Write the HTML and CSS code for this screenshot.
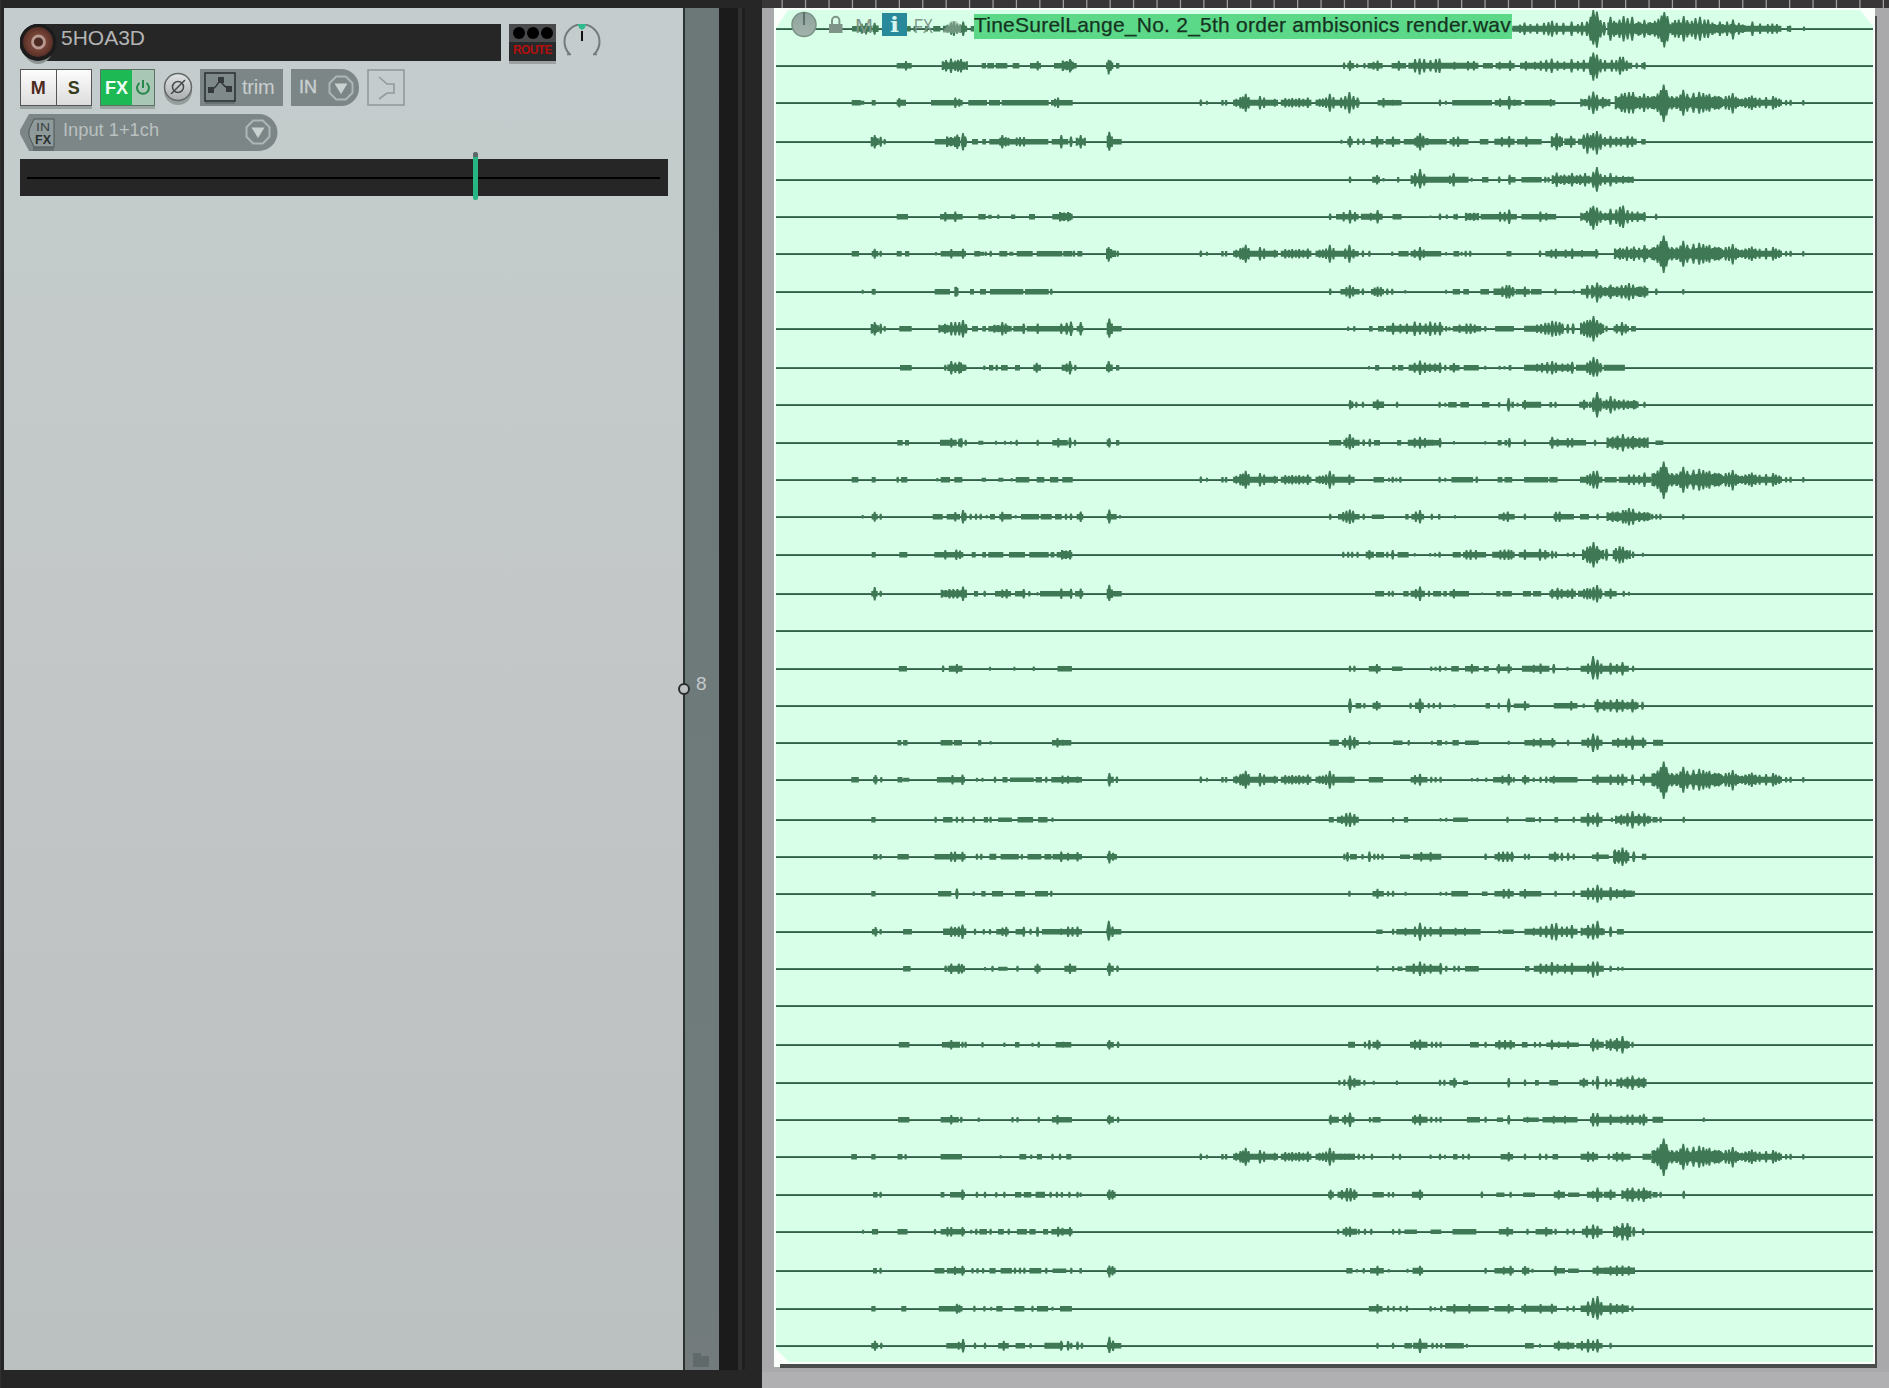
FILE: index.html
```html
<!DOCTYPE html>
<html lang="en">
<head>
<meta charset="utf-8">
<title>5HOA3D</title>
<link rel="stylesheet" href="styles.css">
</head>
<body>
<div class="app">
  <section class="tracks">
    <div class="panel">
      <div class="row">
        <div class="name">
          <svg class="rec" width="37" height="41" viewBox="0 0 37 41">
            <defs><radialGradient id="rg"><stop offset="0" stop-color="#5a3026"/><stop offset=".6" stop-color="#744236"/><stop offset="1" stop-color="#552f26"/></radialGradient></defs>
            <ellipse cx="18" cy="23" rx="15" ry="17" fill="#8d9494"/>
            <circle cx="18" cy="18.500" r="18.500" fill="#1c1c1c"/>
            <circle cx="18" cy="18" r="15" fill="url(#rg)"/>
            <circle cx="18.500" cy="18" r="6" fill="#4b2b23" stroke="#b89a91" stroke-width="2.800"/>
          </svg>
          <span>5HOA3D</span>
        </div>
        <div class="route">
          <div class="leds"><i></i><i></i><i></i></div>
          <b>ROUTE</b>
        </div>
        <svg class="pan" width="38" height="37" viewBox="0 0 38 37">
          <path d="M7 30.500A17.500 17.500 0 1 1 31 30.500" fill="none" stroke="#747b7b" stroke-width="2"/>
          <path d="M4 30.500h4M30 30.500h4" stroke="#747b7b" stroke-width="1.500"/>
          <path d="M15 0h8l-1 4-3 2-3-2z" fill="#2dbb8c"/>
          <path d="M19 7v10" stroke="#111" stroke-width="2"/>
        </svg>
      </div>
      <div class="row second">
        <div class="ms"><b class="m">M</b><b class="s">S</b></div>
        <div class="fx"><b>FX</b><span><svg width="16" height="18" viewBox="0 0 16 18" fill="none" stroke="#26874b" stroke-width="2"><path d="M4.500 4A6 6 0 1 0 11.500 4M8 1v8"/></svg></span></div>
        <svg class="phase" width="30" height="34" viewBox="0 0 30 34">
          <defs><linearGradient id="pg" x2="0" y2="1"><stop offset="0" stop-color="#e2e4e4"/><stop offset="1" stop-color="#a9adad"/></linearGradient></defs>
          <circle cx="15" cy="19" r="14" fill="#969d9d"/>
          <circle cx="15" cy="15" r="13.500" fill="url(#pg)" stroke="#626868" stroke-width="1.500"/>
          <circle cx="15" cy="15" r="5.500" fill="none" stroke="#454a4a" stroke-width="1.500"/>
          <path d="M8 22L22 8M12.500 17.500L17.500 12.500" stroke="#454a4a" stroke-width="1.500"/>
        </svg>
        <div class="trim">
          <svg width="32" height="32" viewBox="0 0 32 32">
            <path d="M1 30h30v3H1z" fill="#687171"/>
            <rect x="1" y="1" width="30" height="28" fill="#7f898a" stroke="#2f3434" stroke-width="1.600"/>
            <path d="M7 18Q12 16 16 8Q20 16 26 16" fill="none" stroke="#343a3a" stroke-width="1.600"/>
            <path d="M4 15h6v6H4zM14 5h6v6h-6zM22 14h6v6h-6z" fill="#343a3a"/>
          </svg>
          <span>trim</span>
        </div>
        <div class="in"><span>IN</span><svg width="26" height="26" viewBox="0 0 26 26"><path d="M8.200 1.500h9.600l6.700 6.700v9.600l-6.700 6.700H8.200l-6.700-6.700V8.200z" fill="none" stroke="#aeb6b6" stroke-width="2"/><path d="M6.500 8.500h13l-6.500 10.500z" fill="#c9d0d0"/></svg></div>
        <svg class="mode" width="38" height="37" viewBox="0 0 38 37" fill="none" stroke="#939a9b" stroke-width="1.600"><rect x="1" y="1" width="36" height="35"/><path d="M12 8l8 7h7v9h-7l-8 6"/></svg>
      </div>
      <div class="input">
        <svg class="tip" width="258" height="37" viewBox="0 0 258 37"><path d="M9 0H239A18.500 18.500 0 0 1 239 37H9L0 20V16z" fill="#7c8687"/></svg>
        <svg class="infx" width="28" height="33" viewBox="0 0 28 33">
          <path d="M5 28h21v5H5z" fill="#667071"/>
          <path d="M6 1h20v28H6L1 18v-6z" fill="#8f9a9a" stroke="#4d5657"/>
          <text x="8" y="12.500" fill="#3d4545" font-size="11.500" textLength="14" lengthAdjust="spacingAndGlyphs">IN</text>
          <text x="7" y="25.500" fill="#2a3030" font-weight="bold" font-size="12.500" textLength="16" lengthAdjust="spacingAndGlyphs">FX</text>
        </svg>
        <span>Input 1+1ch</span>
        <svg class="drop" width="26" height="26" viewBox="0 0 26 26"><path d="M8.200 1.500h9.600l6.700 6.700v9.600l-6.700 6.700H8.200l-6.700-6.700V8.200z" fill="none" stroke="#aeb6b6" stroke-width="2"/><path d="M6.500 8.500h13l-6.500 10.500z" fill="#c9d0d0"/></svg>
      </div>
      <div class="fader"><div class="groove"></div><div class="thumb"></div></div>
    </div>
    <div class="side">
      <i class="node"></i><span class="num">8</span>
      <svg class="folder" width="16" height="15" viewBox="0 0 16 15"><path d="M0 1h8v3h8v11H0z" fill="#606a6b"/></svg>
    </div>
    <div class="meter"></div>
    <div class="gutter"></div>
  </section>
  <section class="arrange">
    <svg class="ruler" id="ruler" width="1127" height="8"></svg>
    <div class="lane">
      <div class="item">
        <svg id="wave" width="1103" height="1360" viewBox="774 8 1103 1360"></svg>
        <div class="head">
          <svg width="170" height="30" viewBox="0 0 170 30">
            <defs><linearGradient id="kg" x2="0" y2="1"><stop offset="0" stop-color="#8fa39d"/><stop offset="1" stop-color="#a3b3ac"/></linearGradient></defs>
            <circle cx="13" cy="13.500" r="12" fill="url(#kg)" stroke="#7b9187" stroke-width="1.500"/>
            <path d="M13 1v13" stroke="#4d5f58" stroke-width="1.500"/>
            <path d="M38 13h13.500v9H38z" fill="#809388"/><path d="M41 13V9.500a3.700 3.700 0 0 1 7.400 0V13" fill="none" stroke="#809388" stroke-width="2"/>
            <text x="64" y="22" font-size="21" fill="#7d9688" textLength="18" lengthAdjust="spacingAndGlyphs">M</text>
            <rect x="91" y="2" width="25" height="23" fill="#28899a"/>
            <text x="99" y="21" font-size="21" font-weight="bold" font-family="DejaVu Serif, serif" fill="#d8f5ee" textLength="9" lengthAdjust="spacingAndGlyphs">i</text>
            <text x="123" y="22" font-size="21" fill="#7d9688" textLength="19" lengthAdjust="spacingAndGlyphs">FX</text>
            <path d="M152 20l8-10h5l9 8v4h-22z" fill="#8fa899" fill-opacity=".6"/>
          </svg>
          <span class="file">TineSurelLange_No. 2_5th order ambisonics render.wav</span>
        </div>
      </div>
    </div>
  </section>
</div>
<script src="wave.js"></script>
</body>
</html>
```
FILE: styles.css
```css
* { box-sizing: border-box; }
body { margin: 0; background: #262626; font-family: "Liberation Sans", Arial, sans-serif; overflow: hidden; }
svg { display: block; flex: none; }
.app { display: flex; width: 1889px; height: 1388px; }

.tracks { display: flex; width: 762px; padding: 8px 0 18px 3px; background: #262626; border-left: 1px solid #303030; }
.panel { width: 679px; padding: 16px 15px 0 16px; background: linear-gradient(#c5cccd 0, #c4cbcb 220px, #c3c7c8 45%, #c1c4c5 65%, #bbc0c0); }
.row { display: flex; align-items: flex-start; height: 37px; }
.name { display: flex; align-items: center; width: 481px; height: 37px; background: #262626; border-radius: 18px 0 0 18px; color: #b4b4b4; font-size: 21px; }
.rec { align-self: flex-start; margin-right: 4px; }
.name span { padding-bottom: 9px; }
.route { width: 47px; height: 37px; margin-left: 8px; background: #262a2b; box-shadow: 0 3px 0 #9ba1a3; text-align: center; color: #b30f0f; font-size: 12px; line-height: 17px; }
.route b { letter-spacing: -.6px; }
.leds { display: flex; justify-content: center; gap: 2px; height: 18px; padding-top: 3px; background: #484a4b; }
.leds i { width: 12px; height: 12px; border-radius: 50%; background: #000; }
.pan { margin-left: 7px; }

.second { margin-top: 8px; }
.ms { display: flex; width: 72px; height: 37px; border: 1.500px solid #555; background: linear-gradient(#fdfdfd, #dcdcdc); box-shadow: 0 3px 0 #9aa1a1; font-size: 18px; line-height: 36px; text-align: center; }
.ms b { flex: 1; }
.m { border-right: 1.500px solid #555; color: #4e2a20; }
.s { color: #373c1c; }
.fx { display: flex; width: 55px; height: 37px; margin-left: 8px; border: 1px solid #5d7267; background: #a9c7b5; color: #f2fff6; font-size: 18px; line-height: 36px; text-align: center; box-shadow: 0 3px 0 #9aa5a1; }
.fx b { width: 31px; background: #1cb955; }
.fx span { display: flex; align-items: center; padding-left: 3px; }
.phase { margin: 3px 0 0 8px; }
.trim { display: flex; align-items: center; width: 83px; height: 37px; margin-left: 7px; padding-left: 4px; background: #7c8687; color: #c9cfcf; font-size: 20px; }
.trim span { margin-left: 6px; letter-spacing: -.2px; }
.in { display: flex; align-items: center; justify-content: space-between; width: 68px; height: 37px; margin-left: 8px; padding: 0 5px 0 8px; border-radius: 0 18px 18px 0; background: #7c8687; color: #c9d0d0; font-size: 18px; -webkit-text-stroke: .4px #c9d0d0; }
.mode { margin-left: 8px; }

.input { position: relative; display: flex; width: 258px; height: 37px; margin-top: 8px; padding: 4px 7px 0 8px; color: #b9c0c0; font-size: 18.300px; }
.tip { position: absolute; left: 0; top: 0; }
.infx, .input span, .drop { position: relative; }
.input span { margin: 1px 0 0 7px; }
.drop { margin: 1px 0 0 auto; }
.fader { position: relative; width: 648px; height: 37px; margin-top: 8px; padding: 18px 8px 0 7px; background: #262626; }
.groove { height: 2px; background: #000; }
.thumb { position: absolute; left: 453px; top: -7px; width: 5px; height: 48px; border-top: 5px solid #5c6665; border-radius: 2px; background: #27b584; }

.side { position: relative; width: 36px; border-left: 2px solid #2c3131; background: linear-gradient(#6c7778, #707b7b 85%, #737b7c); color: #c4caca; }
.node { position: absolute; left: -7px; top: 675px; width: 12px; height: 12px; border: 2px solid #2a2e2e; border-radius: 50%; background: #bdc1c2; }
.num { position: absolute; left: 11px; top: 665px; font-size: 19px; }
.folder { position: absolute; left: 8px; bottom: 3px; }
.meter { width: 26px; border-left: 19px solid #1b1b1b; border-right: 3px solid #1f1f1f; background: #303030; }
.gutter { flex: 1; }

.arrange { display: flex; flex-direction: column; flex: 1; background: #b0b0b2; }
.ruler { background: #383637; }
.lane { display: flex; height: 1364px; padding-left: 12px; background: #a9a9ab; }
.item { position: relative; width: 1103px; height: 1360px; }
.head { position: absolute; left: 17px; top: 3px; display: flex; gap: 13px; }
.file { height: 25px; width: 538px; margin-top: 3px; background: #5cd889; color: #15331f; font-size: 21px; line-height: 21px; white-space: nowrap; letter-spacing: .24px; -webkit-text-stroke: .25px #15331f; }
```
FILE: wave.js
```js
// Horizontal scales: start pixel and units per pixel.
const scales = {
  a: [840, 3], b: [1180, 2.2116], c: [1180, 2.45], d: [840, 1.6], e: [760, 2.8]
};
// Tokens: "from-to*amp" is a block, "x:up/down" a peak; amplitudes are thirds of a pixel.
const swell = 'c 51:10 66:6 101-107 110-116 130-240*9 138:12 148:17 154:19 161:27 168:17 196:20 206:16 232:12 247-322*9 258:14 267:12 275:14 284:12 292:14 302:12 313:16 332-428*9 342:12 350:13 358:16 367:27 376:17';
const tail = 'c 1155-1325*17 1325-1410*12 1410-1475*9 1162:20 1170:28 1178:38 1185:55/58 1192:38 1205:20 1218:18 1226:25 1233:39 1243:27 1258:30 1272:33 1282:29 1290:24 1297:27 1310:21 1320:20 1337:20 1345:22 1354:29/32 1362:18 1385:16 1394:17 1401:22 1410:16 1420:15 1436:17 1453:20 1460:16 1468:13 1485:8 1496:9 1527:8';

const lanes = [
 [28, 'e 258-275 275-313*9 285:15 297:17 315-332*10 321:18 412-422 430-436 462-470 485-505 512-580*9 525:12 535:18 543:22 552:15 561:13 569:22 590-600',
  'b 735-905*9 752:13 762:19 775:14 790:16 805:18 815:20 823:24 833:18 848:18 866:22 880:14 889:20 900:22 908:36 914:56/48 922:52/57 930:26 945-1180*17 938:20 952:36 960:24 972:28 981:38 990:32 1000:36 1014:22 1027:27 1040:20 1050:24 1058:30 1065:40 1071:50/56 1078:38 1095:26 1103:28 1114:38 1122:26 1132:24 1140:32 1150:36 1160:28 1168:28 1180-1250*13 1194:22 1210:22 1223:28/32 1236:18 1250-1330*9 1266:22 1283:16 1300:14 1310:16 1320:14 1342-1352 1349:10 1380:7'],
 [65, 'a 170-215 198:14 305-380*12 318:17 333:22 346:16 354:18 363:20 372:12 425-438 442-462 467-502 518-538 570-603 593:14 642-710 665-698*14 690:20 798-820*10 806:18/26 812:16 828-838', 'b 363:10 370-385 376:16 392:7 408:8 415-448 428:12 437:16 468-500 484:15 505-660*9 520:20 530:22/27 540:20 554:17 566:20 574:22 607:12 637:14 650:14 670-692 698-740 707:12 730:16 752-905*9 765:14 785:12 798:15 810:18 822:22 835:15 850:13 866:20 880:14 893:18 905-1000*9 908:28 914:40/45 922:34/38 930:20 940:17 955:18 965:17 973:27 980:27/17 988:16 1010:9 1020-1030 1027:11'],
 [102, 'a 35-62 62-73*6 95-107 170-198*9 178:14 273-368 346:16 358:12 385-441 447-480 485-626 633-698 645:12 654:16', 'b 437-490 450:14 470:9 575:10 588:6 602-690 696-755 708:13 728:20 740:10 762-830 820:11 885-950*11 905:22 914:34 922:24 935:17', swell, 'c 415:32 395:16 405:20 425:20 435:16 428-440 1065-1160*18 1082:28 1090:30 1100:32 1110:32 1120:16 1137:28', tail],
 [141, 'a 92-115*13 104:20 122:15 134:8 284-320 318-360*14 352:22 369:26 376:16 396-414 427-438 448-625 478-505*11 487:20 497:14 530:13 540:14 552:14 635-685 664:20 693:16 707-732*11 722:20 800-818*16 808:30/27 818-845', 'b 357:6 370-382*9 376:17 394:10 406:10 422-450 436:17 455-487 471:16 495-590*8 518-545*11 525:18 531:26 538:18 596-638 605:14 615:16 663-682 695-740*9 712:14 728:17 745-800 766:16 820-845*15 833:26 850-875*10 865:18 880-1010*9 893:22 901:26/36 908:20 914:26 922:32/38 930:24 940:14 952:18 965:14 975:14 990:18 1000:16 1020-1030'],
 [179, 'b 376:10 425-442*9 436:14 450:5 480-485 510-545*12 520:20 531:32/26 540:18 545-638*9 605:20 597:13 645:6 668-682 706:10 726-742 729:15 755-800 808:9 815:8 822-905*12 833:22 850:16 867:20 885:16 896:20 914:24 922:38/36 930:18 905-1000*8 940:14 952:20 965:13 980:12 992:10 1001:10'],
 [216, 'a 170-204 300-368 316:14 346:16 415-437 445-455*6 475:7 513-526*7 567-585 637-698 657-690*13', 'b 332:10 345-395*8 362:14 376:20 387:14 400-448*9 422:12 437:20 470-490 554:4 575:10 590:7 607:8 612:9 630-660*11 665-745*8 708:15 718:14 728:22 755-832 797:16 810:12 885-950*11 900:18 908:28 914:33/39 922:28 930:18 940-1030*10 952:24 965:22 973:30 980:34 990:20 1000:16 1012:16 1027:14 1053:9'],
 [253, 'a 35-57 95-115 104:15 122:9 170-185 195-208 288:5 302-378 334:14 369:15 403-420 420-432*6 437:7 452:9 478-502 508-520*6 530-578 590-667 670-697 702:9 712-727 798-812*14 806:20/24 812-828*10 833:9', swell, 'c 415:27 405:16 425:14 428-438 448:10 464:9 520:7 535-560 565-640 575:13 588:20 597:13 652:5 670-684 690:6 700:9 711:9 800-812 882:10 895-1025 910:13 921:15 945:13 961:16 985:11 1020:14 1063-1160*14 1078:18 1095:22 1112:22 1125:18 1138:26', tail],
 [291, 'a 68:6 95-107 102:9 284-330 343-355*13 349:15 390-402 420-438 450-490 490-550 555-626 634:9', 'c 368:10 393-440*8 408:14 416:20 424:14 448:10 468-500*8 477:13 484:16 492:14 508:10 520:9 552:5 652:6 668-686 694-708 736-757 768-820*10 790:16 800:20 807:20 815:14 822-857 845:16 860-886 920:9 965:6 982-1005*9 998:20 1010:20 1022:28/32 1030:20 1010-1145*14 1055:22 1070:16 1082:20 1092:20 1100:26 1110:22 1125:16 1138:18 1167:10 1233:8'],
 [328, 'a 92-115*13 104:20 122:15 134:8 178-215 295-375*11 315:15 334:20 346:20 358:20 369:26 378:14 396-414 427-438 445-515 460-505*11 487:20 497:16 520-556 551:16 560-700 593:16 664:16 680:18 693:22 710-730 722:20 800-818*16 808:31/27 818-845', 'c 412:7 427:8 463-472 485-500 505-645*9 522:18 540:14 556:16 575:22 588:18 602:16 613:22 625:18 637:20 652:8 660:6 668-738*8 685:13 702:16 712:16 722:13 748:8 772-818 843-940*9 875:13 885:14 895:18 903:18 912:24 921:22 930:20 937:16 950:14 963:16 980-1035*16 990:22 998:26 1005:27 1013:38 1022:26 1030:18 1045:9 1062-1100 1070:14 1083:20 1092:14 1105-1117'],
 [367, 'a 180-215 316:9 322-375*10 334:20 346:16 358:18 363:16 376:9 433:7 447-460 470:9 483-503 525-540 580-603*9 590:15 665-697*9 680:13 690:20 706:9 798-818*10 806:20/14 828-838', 'c 463:5 478-488 520-528 534-547 560-640*9 575:15 588:22 600:16 612:13 625:13 637:16 650:9 660-685 671:14 695-732 748:6 783:6 795:5 805-812 843-965*9 875:12 887:14 900:17 912:20 921:16 937:13 950:13 961:18 970-1035*9 998:16 1005:22 1013:32/27 1022:26 1030:14 1038-1090*9'],
 [404, 'c 417:14 422:10 432:9 448:9 472-500*10 484:16 532:9 636:9 650:6 657-678 687-708 740-758 782:8 805:20 812-818*9 827:6 838-885*9 845:14 905-912 920:9 978-1000*9 990:15 1005:10 1013:22 1022:38 1030:20 1035-1120*11 1045:16 1055:26 1065:18 1075:14 1087:16 1098:13 1112:14 1138:9'],
 [442, 'a 172-188 195-207 300-350*9 334:14 358:12 364:14 377:9 415-430*6 468:6 495:6 513:5 530:9 593:9 637-683 655:14 690:16 705:9 800-812*10 808:14 828-838', 'c 365-395 400-440*9 408:16 416:26/20 424:16 450:10 465:12 475-490 532-542 558-622*9 575:14 588:18 600:14 622-636 637:14 671:5 748:5 778-788 795-802 807:14 845:10 905-995*8 912:18 925:12 950:14 961:14 1017:9 1045-1145*14 1060:18 1072:22 1085:26 1098:18 1110:20 1125:16 1138:16 1165-1184*7'],
 [479, 'a 35-55 95-107 173:9 183-202 292:5 302-330 343-367 425-438*6 475-490*6 515:5 527-568 590-613 630-655 667-698', swell, 'c 415:16 474-500 512:6 521:9 530:6 540:9 636:9 650:6 665-718 727:10 778-790 795-814 843-902 905-925 980-1035*9 998:14 1005:18 1013:26 1022:27 1040-1070 1075-1155*9 1087:8 1100:16 1112:16 1125:14 1138:22', tail],
 [516, 'a 68:5 95-113 104:15 122:9 278-308 320-360 346:14 369:20 376:12 392:9 408:9 422:9 440:5 450-465 478-515 487:15 527:5 543-597 602-635 645-665 678:9 693:10 710-730 722:16 800-830 808:22/20 840:5', 'c 368:9 387-440 400:14 408:18 416:22 424:18 450:9 470-500*7 552-560 567-598 578:16 588:20 617:9 632-638 674:5 780-820 793:13 803:16 845:9 915-965 921:15 930:16 980-1002 1023:9 1045-1150*12 1060:16 1072:16 1085:20 1092:20 1100:26 1110:24 1125:16 1138:14 1157:8 1167:8 1177:9 1233:8'],
 [554, 'a 95-107 178-202 283-370 316:14 349:16 360:13 395-407 427-438 445-490 507-555 568-626 635:8 640:8 650-697 663-690*13', 'c 400:9 412:9 422:9 435:9 455-475*9 464:14 480-500 508:9 521:14 533-560 575:5 613:5 625:6 636:9 668-688 693-750*8 702:14 712:16 725:14 765-820*9 785:14 795:16 805:16 812:14 830-905 845:16 882:18 895:14 912:12 921:10 950:6 965:8 985-1035*14 998:24 1005:26 1013:38 1022:26 1045:18 1060-1100*12 1068:20 1077:26 1085:24 1095:14 1110:10 1134:6'],
 [593, 'a 94-113 104:20 122:9 302-375*11 328:14 340:14 352:14 369:22 402-414 434:9 465-513 487:13 500:14 525-556 551:14 568:8 590-595*5 600-690 664:16 693:15 705-730 722:16 800-818*13 808:27/22 818-845', 'c 478-500 512:8 521:9 547-560 565-600*9 578:14 588:22 610:9 620-640 645-654 660-708 671:14 740:4 775-785 790-813 840-860 865-885 905-970*9 912:14 925:18 935:14 950:13 961:16 975-1035*9 990:14 998:17 1005:16 1013:20 1022:26 1030:16 1040-1070 1055:16 1087:9 1100:6'],
 [630],
 [668, 'd 94-107 165:10 174-196*9 187:14 240:6 279:6 310:7 348-371', 'd 816:9 823:9 846-865 859:14 883-900*7 946:7 953:6 960:9 969:6 978-990*8 1000-1022 1011:14 1030-1038 1050-1075*7 1054:14 1070:14 1091-1135*9 1110:12 1121:16 1142:14 1164:6 1185-1220*9 1197:16 1205:38/32 1212:27/32 1218:16 1220-1262*9 1233:18 1243:14 1252:20 1269:9'],
 [705, 'd 816:22 825-834 839:8 852-865*9 859:14 913:9 920-934*10 928:22 942:8 950:8 960:10 983:5 1033-1040 1054:9 1070:22/20 1078-1103*7 1096:14 1142-1180*8 1170:14 1190:7 1207-1275*11 1212:20 1223:16 1233:18 1243:20 1252:18 1268:20 1284:12'],
 [742, 'd 92-98 101-108 161-180 182-195 221-226 241:5 339-370 348:14 357:9', 'd 783-798*9 803-830*8 808:14 816:22 823:17 847:6 885-900*7 910:8 947:6 955-963 970:6 980-990 1000-1022*7 1070:6 1095-1145*8 1110:12 1121:14 1140:14 1165:9 1186-1220*9 1197:15 1205:28 1212:22 1235-1290*9 1245:14 1258:16 1268:22 1285:16 1301-1317*9'],
 [779, 'd 18-30 53-60 57:14 66:8 92-100 101-111*6 155-200 180:14 196:16 219:6 228:6 248:9 260-268 272-310*7 313-323 330:9 338-387*8 356:13 365:12 380:10 428-438*9 431:20 443:10', swell, 'd 817:9 846-869 913-940*8 920:14 928:18 946:9 953:8 961:9 1011:5 1020:6 1034:7 1045-1075*8 1060:13 1070:17 1078:8 1091-1103*8 1096:14 1110:7 1121:9 1130:10 1135-1180*8 1142:12 1203-1260*9 1212:16 1233:16 1245:16 1252:18 1268:16 1280-1300*9 1286:18', tail],
 [819, 'd 50-57 153:9 165-180 187:9 196:9 214:9 230-237 241:9 253-275*7 284-309 317-332 340:7', 'd 782-790 795-830*9 803:13 810:20 816:22 823:17 885:8 902-909 961:5 970:6 981-1005*7 1068:9 1097-1112*7 1120:8 1143-1149 1174:9 1185-1220*9 1197:20 1205:14 1212:22 1235:7 1240-1296*11 1250:16 1260:20 1268:26 1278:18 1287:20 1300-1308 1313:9 1350:9'],
 [856, 'd 53-60 65:8 92-110 151-201 178:15 184:16 196:15 219:9 226:9 239-250*9 257-286 291:8 300-322 327-338 340-387*8 354:16 365:12 380:14 427-443 431:18/20 437:12', 'd 807:9 812:14 816-827*8 836:8 847:16 855:9 861:9 868:9 896-912*7 917-962*9 930:14 945:14 1033:10 1047-1078*8 1054:14 1061:16 1068:16 1075:15 1096:9 1102:9 1134-1150*9 1144:15 1155:12 1165:12 1174:9 1203-1230*7 1212:14 1237-1260*16 1240:22 1246:20 1252:28 1258:20 1270:16 1283-1290*9'],
 [893, 'd 50-57 157-178 187:16 214:7 226-233 243-261 280-296 312-333 338:9', 'd 815:9 852-870 860:15 877:8 885:9 905:6 961:6 970:6 978-1005*8 1027-1036*7 1047-1078*8 1062:14 1070:15 1087-1122*8 1096:14 1145:9 1174:9 1185-1268*10 1197:18 1205:18 1212:27 1218:18 1233:20 1243:14 1255:14 1270:9'],
 [931, 'd 51-60 57:14 65:8 101-115 165-202*10 178:16 184:14 190:16 196:22 216:9 230:8 240:8 250-270 260:13 266:15 281-296 294:15 305:9 316:15 323-387*8 354:10 365:16 372:14 380:16 427-450 430:33/27 436:16', 'd 858-868*7 885:9 890-1025*8 905:12 920:16 928:27 936:16 945:14 961:16 985:12 1000:12 1055:6 1060-1078*7 1095-1180*9 1110:12 1121:16 1130:18 1139:24 1146:26 1155:16 1163:16 1171:20 1185-1222*11 1197:20 1205:24 1212:33/20 1233:16 1243-1254*8'],
 [968, 'd 101-113 169:10 172-200*9 178:16 190:16 195:14 232:5 244:9 253-268*6 284:9 311-321*9 316:15 359-378*9 368:16 427-438*9 431:18/22 444:10', 'd 860:9 885:8 892-900*7 905-962*9 918:16 928:22 935:16 945:14 961:17 970:9 983:9 990:9 1000-1022*8 1096-1103*8 1110-1185*9 1121:16 1130:14 1139:20 1148:14 1160:14 1171:18 1185-1222*9 1197:14 1205:22/26 1212:22 1233:9 1245:6 1252:6'],
 [1005],
 [1044, 'd 94-111 163-172 172-192*9 178:14 196:9 201:9 228:8 263:7 280-287*8 308:6 318:9 345-370 357:9 427-438*8 431:14 445:10', 'd 813-824*9 840:9 847:14 852-865*9 860:15 912-940*9 920:14 928:16 947:9 954:9 961:9 1008-1022*8 1033:9 1048-1080*8 1055:14 1064:14 1073:14 1091-1100 1112:8 1120:8 1130-1182*7 1139:15 1150:10 1165:12 1200-1222*9 1205:20 1212:16 1225-1262*12 1233:18 1243:20 1252:26 1268:9'],
 [1082, 'd 799:8 807:10 812-833*9 816:22 823:14 839:8 854:6 891:7 960:9 967:9 975-987*8 983:15 997-1005*7 1070:14 1096:10 1112-1118 1135-1149*8 1183-1197*9 1190:14 1205:9 1212:20 1226:12 1233:10 1242-1290*11 1250:16 1260:18 1268:22 1278:16 1286:16'],
 [1119, 'd 93-111 161-190 178:14 194:9 222:7 276:8 284:8 318:9 339-371 348:14 427-438*9 431:14 445:9', 'd 782-798*9 785:15 803-823*8 808:14 816:22 848:8 852-865*8 915-940*9 920:14 928:17 946:9 954:8 961:9 1003-1024 1033:9 1051-1061*7 1070:14 1093-1118*7 1100:9 1124-1180*8 1142:12 1160:12 1200-1220*9 1205:20 1212:20 1220-1292*9 1233:16 1250:12 1260:16 1268:16 1280:14 1286:18 1300-1317*9 1382:7'],
 [1156, 'd 18-27 50-57 92-100 105:8 161-195 257:5 287-298 306:7 315-323 340:9 352:9 362-370', swell, 'd 801:9 808:9 815:9 822:9 830:9 838:8 851:9 885:9 896:9 945:7 960:9 968:6 981-988 997:8 1006:9 1057-1077*8 1070:14 1096:9 1120:10 1130:9 1140-1149 1185-1213*9 1197:16 1205:14 1230:9 1236-1265*9 1243:14 1252:14 1284-1298*9', tail],
 [1194, 'd 53-60 65:9 161-167 176-200 196:16 219:9 232:9 250:8 263:9 280-290 294-306 313-328*9 337:9 347:9 355:8 367:9 380:9 385:7 427-441*9 431:16 436:14', 'd 781-790*9 785:15 796-828*9 803:14 811:20 817:20 823:16 852-870 878:8 885:8 915-933*9 928:16 1027:10 1050-1063*7 1073:9 1093-1112*7 1142-1160*9 1150:14 1165-1183*7 1195-1220*9 1205:12 1212:22 1222-1241*9 1233:16 1250-1295*12 1260:20 1268:22 1278:18 1286:22 1300-1308 1313:9 1350:12'],
 [1231, 'd 37:6 51-61 92-108 152:8 161-200 172:14 178:14 196:14 210:6 218:9 223-235 241:9 253-262 270:9 283-299 303-313 325-333 338-372*8 349:15 356:12 368:14', 'd 797:8 804-827*9 810:14 816:16 830:8 840:9 850:9 885:8 895:9 903-923*7 945-962*7 980-1018*8 1054-1077*8 1068:14 1100:9 1113-1140*8 1130:14 1145:9 1164:9 1174:9 1187-1220*9 1195:18 1205:22 1212:18 1237-1265*14 1243:18 1252:26 1260:26 1270:14 1285:10'],
 [1270, 'd 53-59 65:9 151-167 171-200 184:13 196:15 212:8 220:8 229:8 239-249 257-275 280:9 288:9 295:9 303-322 330:9 340-362*7 370:9 383-387 427-441*9 431:16/20 436:14', 'd 810-820 827:5 838:8 848-870 860:15 878:5 908:6 916-933*9 928:15 1033:9 1047-1078*8 1062:12 1073:15 1091-1103*9 1096:14 1108:6 1142-1160 1145:15 1165-1182*7 1204-1222*9 1212:15 1222-1272*10 1233:14 1243:16 1252:16 1262:14'],
 [1308, 'd 50-57 98-106 158-196 187:15 191:12 215:9 231:8 242:6 250-260 279-295 308:9 315-333 340:6 352-371', 'd 846-868*8 860:14 877:9 886:8 897:8 907:9 945:8 952:5 962:9 970-1038*8 983:14 1007:14 1047-1078*8 1070:14 1090-1147*9 1096:14 1121:14 1139:15 1164:8 1174:9 1185-1262*10 1197:22 1205:33/28 1212:38/33 1218:20 1233:17 1243:14 1252:14 1268:9'],
 [1345, 'd 50-61 56:15 66:9 170-200 190:12 197:20 216:9 232:9 253-270 262:15 281-296 305:8 327-357*9 354:15 365:14 370:9 380:13 387:9 427-450 431:27/22 437:16', 'd 860:9 885:9 903-915 917-940*9 928:22 948:9 955:8 962:8 968-998*8 1003:6 1096-1110*8 1120:6 1142-1175*9 1150:15 1165:12 1178-1220*8 1187:14 1197:20 1205:16 1212:20 1233:9']
];

const blocks = (text, mid) => {
  const [key, ...tokens] = text.split(' ');
  const [x0, k] = scales[key];
  let d = '';
  for (const t of tokens) {
    if (t.includes(':')) {
      const [x, amp] = t.split(':');
      const [up, down = up] = amp.split('/').map(Number);
      const px = x0 + x / k, w = 1.3 + up * 0.045;
      const u = up / 3, v = down / 3;
      d += `M${(px - w).toFixed(1)} ${mid}L${(px - .8).toFixed(1)} ${(mid - u).toFixed(1)}h1.6L${(px + w).toFixed(1)} ${mid}L${(px + .8).toFixed(1)} ${(mid + v).toFixed(1)}h-1.6z`;
    } else {
      const [span, amp = 8.5] = t.split('*');
      const [a, b] = span.split('-').map(n => x0 + n / k);
      const h = amp / 3;
      if (amp < 11) {
        d += `M${a.toFixed(1)} ${(mid - h).toFixed(1)}H${b.toFixed(1)}V${(mid + h).toFixed(1)}H${a.toFixed(1)}z`;
      } else {
        for (let x = a, i = 0; x < b; x += 2, i++) {
          const g = h * [1.1, .85, 1, .8][i % 4];
          d += `M${x.toFixed(1)} ${(mid - g).toFixed(1)}h2.2v${(2 * g).toFixed(1)}h-2.2z`;
        }
      }
    }
  }
  return d;
};

let lines = '', shapes = '';
for (const [y, ...parts] of lanes) {
  lines += `<path d="M776 ${y}h1097v1H776z" fill="#5f8f76"/><path d="M776 ${y + .6}h1097v1.300H776z" fill="#315f48"/>`;
  for (const p of parts) shapes += `<path d="${blocks(p, y + .7)}"/>`;
}
document.getElementById('wave').innerHTML =
  '<path d="M780 1364V1368H1877V16H1875V1364z" fill="#4a4c4b"/>' +
  '<path d="M774 8H1875V1364H780V1367H774z" fill="#fafffc"/>' +
  '<path d="M776 28L788 10H1860L1873 26V1362H789L776 1349z" fill="#d8ffe8"/>' +
  lines + `<g fill="#3f7855">${shapes}</g>`;

let ticks = '';
for (let i = 0; i < 48; i++) ticks += `<path d="M${(19.5 + i * 23.43).toFixed(1)} 0h1.300v8h-1.300z" fill="#9c9c9c"/>`;
document.getElementById('ruler').innerHTML = ticks;
```
